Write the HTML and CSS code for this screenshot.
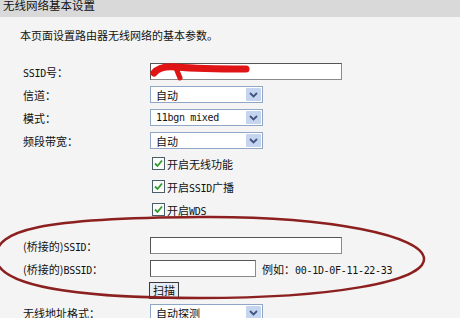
FILE: index.html
```html
<!DOCTYPE html>
<html lang="zh-CN">
<head>
    <meta charset="UTF-8">
    <title>无线网络基本设置</title>
    <link rel="stylesheet" href="styles.css">
</head>
<body>
    <div class="title-bar">无线网络基本设置</div>
    <div class="intro">本页面设置路由器无线网络的基本参数。</div>

    <div class="form">
        <div class="row">
            <div class="label"><span class="en">SSID</span>号：</div>
            <div class="text-box wide"></div>
        </div>
        <div class="row">
            <div class="label">信道：</div>
            <div class="select">自动<span class="arrow"><svg width="9" height="6" viewBox="0 0 9 6"><path d="M1 1 L4.5 4.5 L8 1" fill="none" stroke="#3f5483" stroke-width="1.8"/></svg></span></div>
        </div>
        <div class="row">
            <div class="label">模式：</div>
            <div class="select"><span class="en">11bgn mixed</span><span class="arrow"><svg width="9" height="6" viewBox="0 0 9 6"><path d="M1 1 L4.5 4.5 L8 1" fill="none" stroke="#3f5483" stroke-width="1.8"/></svg></span></div>
        </div>
        <div class="row">
            <div class="label">频段带宽：</div>
            <div class="select">自动<span class="arrow"><svg width="9" height="6" viewBox="0 0 9 6"><path d="M1 1 L4.5 4.5 L8 1" fill="none" stroke="#3f5483" stroke-width="1.8"/></svg></span></div>
        </div>
        <div class="row">
            <div class="label"></div>
            <div class="check"><span class="box"><svg width="13" height="13" viewBox="0 0 13 13"><rect x="0.5" y="0.5" width="12" height="12" fill="#fafcf8" stroke="#4a5e6a"/><path d="M3 6.5 L5.5 9 L10 3.5" fill="none" stroke="#2f9a2f" stroke-width="1.8"/></svg></span><span>开启无线功能</span></div>
        </div>
        <div class="row">
            <div class="label"></div>
            <div class="check"><span class="box"><svg width="13" height="13" viewBox="0 0 13 13"><rect x="0.5" y="0.5" width="12" height="12" fill="#fafcf8" stroke="#4a5e6a"/><path d="M3 6.5 L5.5 9 L10 3.5" fill="none" stroke="#2f9a2f" stroke-width="1.8"/></svg></span><span>开启<span class="en">SSID</span>广播</span></div>
        </div>
        <div class="row">
            <div class="label"></div>
            <div class="check"><span class="box"><svg width="13" height="13" viewBox="0 0 13 13"><rect x="0.5" y="0.5" width="12" height="12" fill="#fafcf8" stroke="#4a5e6a"/><path d="M3 6.5 L5.5 9 L10 3.5" fill="none" stroke="#2f9a2f" stroke-width="1.8"/></svg></span><span>开启<span class="en">WDS</span></span></div>
        </div>
        <div class="spacer"></div>
        <div class="row">
            <div class="label">(桥接的)<span class="en">SSID</span>：</div>
            <div class="text-box wide"></div>
        </div>
        <div class="row">
            <div class="label">(桥接的)<span class="en">BSSID</span>：</div>
            <div class="text-box short"></div>
            <div class="hint">例如：<span class="en">00-1D-0F-11-22-33</span></div>
        </div>
        <div class="row button-row">
            <div class="label"></div>
            <div class="button">扫描</div>
        </div>
        <div class="row">
            <div class="label">无线地址格式：</div>
            <div class="select">自动探测<span class="arrow"><svg width="9" height="6" viewBox="0 0 9 6"><path d="M1 1 L4.5 4.5 L8 1" fill="none" stroke="#3f5483" stroke-width="1.8"/></svg></span></div>
        </div>
    </div>

    <!-- hand drawn marks on the screenshot -->
    <svg class="marks" width="460" height="318" viewBox="0 0 460 318">
        <path d="M154 73 C158 68, 166 66, 176 67 C200 69, 225 69, 246 69" fill="none" stroke="#e01414" stroke-width="7" stroke-linecap="round"/>
        <path d="M176 68 L180 78" fill="none" stroke="#e01414" stroke-width="5" stroke-linecap="round"/>
        <path d="M-4 257 C-4 230, 40 218, 200 217 C330 216, 424 236, 424 259 C424 282, 330 298, 200 298 C70 298, -4 285, -4 257 Z" fill="none" stroke="#8c1f1f" stroke-width="2.5"/>
    </svg>
</body>
</html>
```

FILE: styles.css
```css
body {
    margin: 0;
    position: relative;
    height: 318px;
    overflow: hidden;
    background-color: #f4f4f4;
    font-family: "Noto Sans CJK SC", sans-serif;
    font-size: 11px;
    color: #111;
}
.en {
    font-family: "DejaVu Sans Mono", monospace;
    font-size: 10px;
    letter-spacing: -0.3px;
}
.title-bar {
    height: 17px;
    line-height: 11px;
    padding-left: 3px;
    background-color: #d9d9d9;
    font-size: 11.5px;
}
.intro {
    padding: 11px 0 0 20px;
    line-height: 14px;
}
.form {
    padding: 18px 0 0 23px;
}
.row {
    display: flex;
    align-items: center;
    height: 23px;
}
.spacer {
    height: 13px;
}
.button-row {
    height: 21px;
}
.label {
    width: 127px;
    flex-shrink: 0;
}
.text-box {
    height: 15px;
    background-color: #fff;
    border: 1px solid #555;
    border-right-color: #8a8a8a;
    border-bottom-color: #8a8a8a;
}
.text-box.wide {
    width: 190px;
}
.text-box.short {
    width: 104px;
}
.select {
    display: flex;
    align-items: center;
    justify-content: space-between;
    width: 106px;
    height: 15px;
    padding-left: 5px;
    background-color: #fff;
    border: 1px solid #8fa6c4;
}
.arrow {
    display: flex;
    align-items: center;
    justify-content: center;
    width: 15px;
    height: 13px;
    margin-right: 1px;
    background-color: #c6d5ef;
    border-radius: 1px;
}
.check {
    display: flex;
    align-items: center;
    gap: 2px;
}
.box {
    display: flex;
    margin-left: 2px;
}
.hint {
    margin-left: 6px;
}
.button {
    height: 15px;
    line-height: 15px;
    padding: 0 3px;
    margin-left: -1px;
    background-color: #e6ebf4;
    border: 1px solid #3a3a3a;
}
.marks {
    position: absolute;
    top: 0;
    left: 0;
    pointer-events: none;
}
```
